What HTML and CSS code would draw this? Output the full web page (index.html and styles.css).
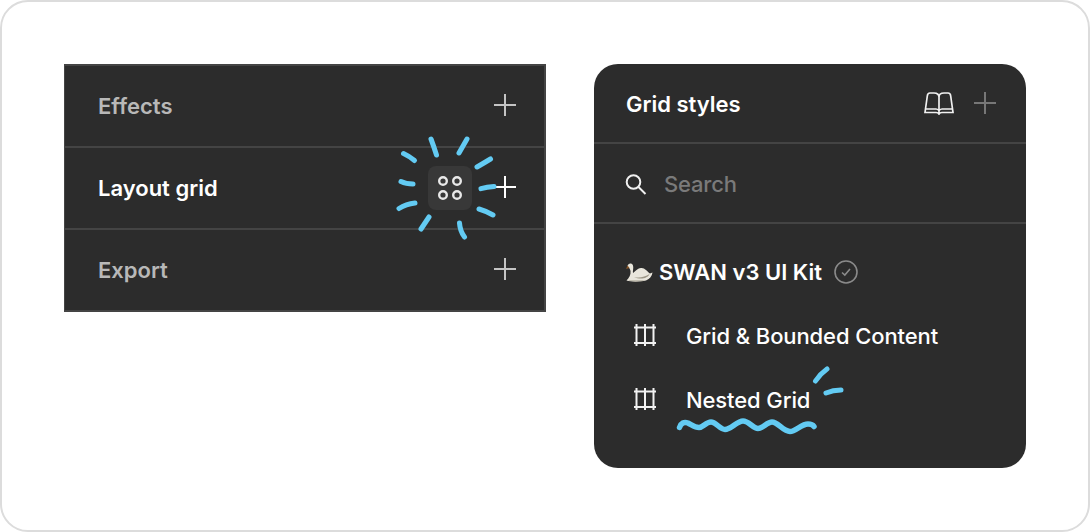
FILE: index.html
```html
<!DOCTYPE html>
<html lang="en">
<head>
<meta charset="utf-8">
<title>Layout grid and grid styles</title>
<link rel="stylesheet" href="styles.css">
</head>
<body>
<main class="frame">
  <section class="panel-left">
    <div class="row">
      <span class="row-title muted">Effects</span>
      <svg class="plus" viewBox="0 0 22 22"><path d="M11 0V22M0 11H22"/></svg>
    </div>
    <div class="row">
      <span class="row-title">Layout grid</span>
      <span class="grid-button">
        <svg class="dots" viewBox="0 0 26 26"><circle cx="6" cy="6" r="3.800"/><circle cx="20" cy="6" r="3.800"/><circle cx="6" cy="20" r="3.800"/><circle cx="20" cy="20" r="3.800"/></svg>
      </span>
      <svg class="plus plus-bright" viewBox="0 0 22 22"><path d="M11 0V22M0 11H22"/></svg>
    </div>
    <div class="row">
      <span class="row-title muted">Export</span>
      <svg class="plus" viewBox="0 0 22 22"><path d="M11 0V22M0 11H22"/></svg>
    </div>
  </section>

  <section class="panel-right">
    <header class="styles-head">
      <h2 class="styles-title">Grid styles</h2>
      <svg class="book" viewBox="0 0 32 24"><path d="M16 6C16 3.500 14 2 11 2H7C5 2 4.500 3 4.300 5L2 21.500H13C14.500 21.500 15.500 22 16 23C16.500 22 17.500 21.500 19 21.500H30L27.700 5C27.500 3 27 2 25 2H21C18 2 16 3.500 16 6ZM16 6V23M3 18H13C14.500 18 15.500 18.800 16 20C16.500 18.800 17.500 18 19 18H29"/></svg>
      <svg class="plus plus-dim" viewBox="0 0 22 22"><path d="M11 0V22M0 11H22"/></svg>
    </header>
    <div class="search">
      <svg class="search-icon" viewBox="0 0 22 22"><circle cx="8.500" cy="9" r="6.800"/><path d="M13.500 14L20.500 21"/></svg>
      <span class="search-text">Search</span>
    </div>
    <div class="library">
      <div class="lib-head">
        <svg class="swan" viewBox="0 0 28 20">
          <path class="swan-body" d="M2.500 4C3 1 7 0.500 8 3.500C8.800 6 7.500 9 8 11C10 10 12 6.500 16 6C19.500 5.500 22 9 25 11.500L27.500 10.500C27 14 25 17 21 18.500C15 20 6 20 1.500 18.500C4 16 6 13 5.500 9C5 6.500 4 6 2.500 4Z"/>
          <path class="swan-shade" d="M9 15C14 16.500 20 15 24.500 12C23 16.500 15 18 9 15ZM3 18.500H20C15 19.700 7 19.700 3 18.500Z"/>
          <path class="swan-bill" d="M2.500 3.500L1 7L4.500 6Z"/>
        </svg>
        <span class="lib-title">SWAN v3 UI Kit</span>
        <svg class="verified" viewBox="0 0 24 24"><circle cx="12" cy="12" r="11"/><path d="M8 12.500L10.800 15L16 9"/></svg>
      </div>
      <div class="item">
        <svg class="grid-icon" viewBox="0 0 22 22"><path d="M0 3.500H22M0 19H22M2.500 0V22M11 0V22M19.500 0V22"/></svg>
        <span class="item-text">Grid &amp; Bounded Content</span>
      </div>
      <div class="item">
        <svg class="grid-icon" viewBox="0 0 22 22"><path d="M0 3.500H22M0 19H22M2.500 0V22M11 0V22M19.500 0V22"/></svg>
        <span class="item-text">Nested Grid</span>
      </div>
    </div>
  </section>

  <svg class="marks" viewBox="0 0 1090 532">
    <path d="M431 139Q434 147 436.500 155"/>
    <path d="M467 139Q463 146 459 153"/>
    <path d="M490.500 159Q484 163 477 167"/>
    <path d="M494 186.500Q487 187 481 188.700"/>
    <path d="M479 209Q486 211 493 215"/>
    <path d="M459.500 223Q460 231 464.500 237"/>
    <path d="M429 217Q425 223 421 229"/>
    <path d="M415 203Q406 204 399 208.500"/>
    <path d="M401 181.500Q406 184 413 184"/>
    <path d="M403.500 153.500Q409 156 414.500 160.500"/>
    <path d="M827 369Q820 374 815.500 381"/>
    <path d="M841 390Q833 390 826 393"/>
    <path class="squiggle" d="M679.500 427.500C681 423 684 421.500 688 423C692 425 695 427.500 699 427.500C703 427.500 706 422 711 422C716 422 720 429.500 725 429.500C731 429.500 737 421 743 421C749 421 753 428.500 758 428.500C763 428.500 767 422 772 422C778 422 783 431.500 790 431.500C796 431.500 801 424 808 424C811 424 813 425 814 426.500"/>
  </svg>
</main>
</body>
</html>
```
FILE: styles.css
```css
* { box-sizing: border-box; }
html, body { margin: 0; padding: 0; }
body { width: 1090px; height: 532px; background: #fff; font-family: Inter, "Noto Sans", sans-serif; overflow: hidden; }

.frame {
  position: relative;
  width: 1090px;
  height: 532px;
  border: 2px solid #dcdcdc;
  border-radius: 28px;
  padding: 62px 0 0 62px;
  display: flex;
  align-items: flex-start;
  gap: 48px;
}

.panel-left {
  width: 482px;
  height: 248px;
  background: #2c2c2c;
  border: solid #444;
  border-width: 2px 2px 2px 1px;
}
.row {
  height: 82px;
  display: flex;
  align-items: center;
  padding: 0 28px 0 33px;
  border-bottom: 2px solid #444;
}
.row:last-child { border-bottom: 0; height: 80px; }
.row-title { flex: 1; font-size: 22px; font-weight: 600; line-height: 26px; color: #fff; }
.row-title.muted { color: #b8b8b8; }

.plus { width: 22px; height: 22px; flex: none; margin-bottom: 2px; fill: none; stroke: #c4c4c4; stroke-width: 2; }
.plus-bright { stroke: #fff; }
.plus-dim { stroke: #777; margin-bottom: 0; }

.grid-button {
  width: 44px;
  height: 44px;
  margin-right: 22px;
  border-radius: 8px;
  background: #383838;
  display: flex;
  align-items: center;
  justify-content: center;
}
.dots { width: 26px; height: 26px; fill: none; stroke: #e8e8e8; stroke-width: 2.400; }

.panel-right {
  width: 432px;
  height: 404px;
  background: #2c2c2c;
  border-radius: 24px;
  overflow: hidden;
}
.styles-head {
  height: 80px;
  display: flex;
  align-items: center;
  padding: 0 30px 0 32px;
  border-bottom: 2px solid #444;
}
.styles-title { flex: 1; margin: 2px 0 0; font-size: 22px; font-weight: 600; line-height: 26px; color: #fff; }
.book { width: 32px; height: 24px; margin-right: 19px; fill: none; stroke: #f0f0f0; stroke-width: 1.700; }

.search {
  height: 80px;
  display: flex;
  align-items: center;
  gap: 17px;
  padding: 2px 0 0 31px;
  border-bottom: 2px solid #444;
}
.search-icon { width: 22px; height: 22px; fill: none; stroke: #f0f0f0; stroke-width: 2; }
.search-text { font-size: 22px; line-height: 26px; color: #7a7a7a; font-weight: 500; letter-spacing: -0.2px; }

.library { padding-top: 16px; }
.lib-head { height: 64px; display: flex; align-items: center; padding-left: 31px; }
.swan { width: 28px; height: 20px; margin-right: 6px; }
.swan-body { fill: #e9e6dc; }
.swan-shade { fill: #9c9686; }
.swan-bill { fill: #8a5526; }
.lib-title { font-size: 22px; font-weight: 600; line-height: 26px; color: #fff; }
.verified { width: 24px; height: 24px; margin-left: 12px; fill: none; stroke: #8a8a8a; stroke-width: 1.600; }

.item { height: 64px; display: flex; align-items: center; padding-left: 40px; gap: 30px; }
.grid-icon { width: 22px; height: 22px; flex: none; margin-bottom: 2px; fill: none; stroke: #f2f2f2; stroke-width: 2; }
.item-text { font-size: 22px; line-height: 26px; color: #fff; font-weight: 500; letter-spacing: -0.1px; }

.marks {
  position: absolute;
  left: -2px;
  top: -2px;
  width: 1090px;
  height: 532px;
  fill: none;
  stroke: #63cbf3;
  stroke-width: 5;
  stroke-linecap: round;
  stroke-linejoin: round;
  pointer-events: none;
}
.squiggle { stroke-width: 5.500; }
```
